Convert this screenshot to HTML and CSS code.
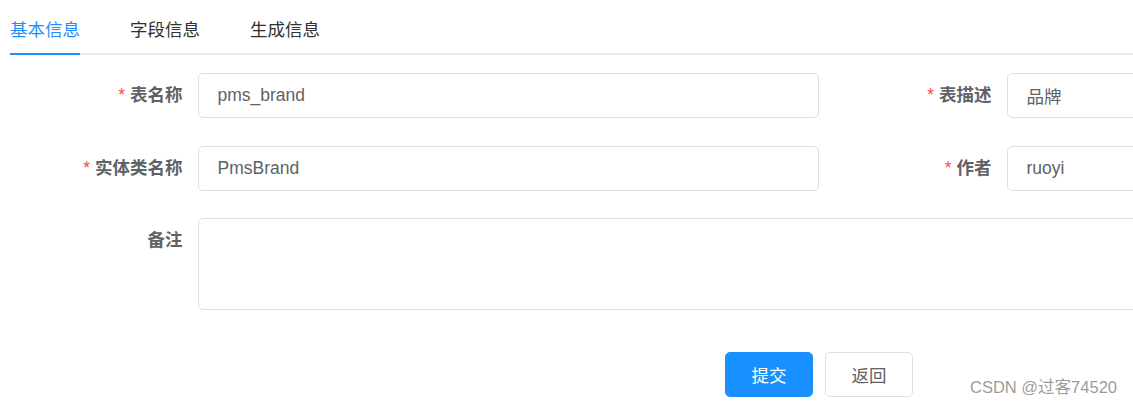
FILE: index.html
```html
<!DOCTYPE html>
<html lang="zh-CN">
<head>
<meta charset="utf-8">
<title>修改生成配置</title>
<link rel="stylesheet" href="styles.css">
</head>
<body>
<div class="page">
  <div class="tabs">
    <div class="tab-item active">基本信息</div>
    <div class="tab-item">字段信息</div>
    <div class="tab-item">生成信息</div>
  </div>
  <form class="form">
    <div class="row">
      <div class="item">
        <label class="label"><span class="star">*</span>表名称</label>
        <div class="control"><input class="input" value="pms_brand"></div>
      </div>
      <div class="item">
        <label class="label"><span class="star">*</span>表描述</label>
        <div class="control"><input class="input" value="品牌"></div>
      </div>
    </div>
    <div class="row">
      <div class="item">
        <label class="label"><span class="star">*</span>实体类名称</label>
        <div class="control"><input class="input" value="PmsBrand"></div>
      </div>
      <div class="item">
        <label class="label"><span class="star">*</span>作者</label>
        <div class="control"><input class="input" value="ruoyi"></div>
      </div>
    </div>
    <div class="row full">
      <div class="item">
        <label class="label">备注</label>
        <div class="control"><textarea class="textarea"></textarea></div>
      </div>
    </div>
    <div class="actions">
      <button type="button" class="btn primary">提交</button>
      <button type="button" class="btn">返回</button>
    </div>
  </form>
</div>
<div class="watermark">CSDN @过客74520</div>
</body>
</html>
```

FILE: styles.css
```css
html, body {
  margin: 0;
  padding: 0;
  background: #fff;
  overflow: hidden;
}
body {
  width: 1133px;
  height: 406px;
  position: relative;
  font-family: "Liberation Sans", "Noto Sans CJK SC", sans-serif;
  font-size: 17.5px;
}
.page {
  padding: 5px 0 0 10px;
  width: 1618px;
}
.tabs {
  display: flex;
  height: 50px;
  box-shadow: inset 0 -2px 0 #e4e7ed;
  margin-bottom: 18px;
}
.tab-item {
  height: 50px;
  line-height: 50px;
  padding: 0 25px;
  color: #303133;
  font-size: 17.5px;
  position: relative;
}
.tab-item:first-child {
  padding-left: 0;
}
.tab-item.active {
  color: #1890ff;
}
.tab-item.active::after {
  content: "";
  position: absolute;
  left: 0;
  right: 25px;
  bottom: 0;
  height: 2px;
  background: #1890ff;
}
.form {
  margin: 0;
}
.row {
  display: grid;
  grid-template-columns: 809px 809px;
  margin-bottom: 27.5px;
}
.row.full {
  grid-template-columns: 1618px;
}
.item {
  display: flex;
  align-items: flex-start;
}
.label {
  width: 187.5px;
  flex: 0 0 187.5px;
  box-sizing: border-box;
  padding-right: 15px;
  text-align: right;
  line-height: 45px;
  font-weight: bold;
  color: #606266;
  font-size: 17.5px;
}
.star {
  color: #ff4949;
  margin-right: 5px;
  font-weight: normal;
}
.control {
  flex: 1;
  min-width: 0;
}
.input, .textarea {
  display: block;
  width: 100%;
  box-sizing: border-box;
  border: 1px solid #dcdfe6;
  border-radius: 5px;
  color: #606266;
  font-family: "Liberation Sans", "Noto Sans CJK SC", sans-serif;
  font-size: 17.5px;
  outline: none;
  background: #fff;
  margin: 0;
}
.input {
  height: 45px;
  padding: 0 19px;
}
.textarea {
  height: 92px;
  padding: 6px 19px;
  resize: none;
}
.actions {
  display: flex;
  justify-content: center;
  gap: 12px;
  padding-top: 14.5px;
}
.btn {
  width: 88px;
  height: 45px;
  box-sizing: border-box;
  border: 1px solid #dcdfe6;
  border-radius: 5px;
  background: #fff;
  color: #606266;
  font-family: "Liberation Sans", "Noto Sans CJK SC", sans-serif;
  font-size: 17.5px;
  padding: 0;
  margin: 0;
}
.btn.primary {
  background: #1890ff;
  border-color: #1890ff;
  color: #fff;
}
.watermark {
  position: absolute;
  right: 16px;
  top: 374px;
  font-size: 16.5px;
  color: rgba(120, 120, 120, 0.75);
  font-family: "Liberation Sans", "Noto Sans CJK SC", sans-serif;
}
```
